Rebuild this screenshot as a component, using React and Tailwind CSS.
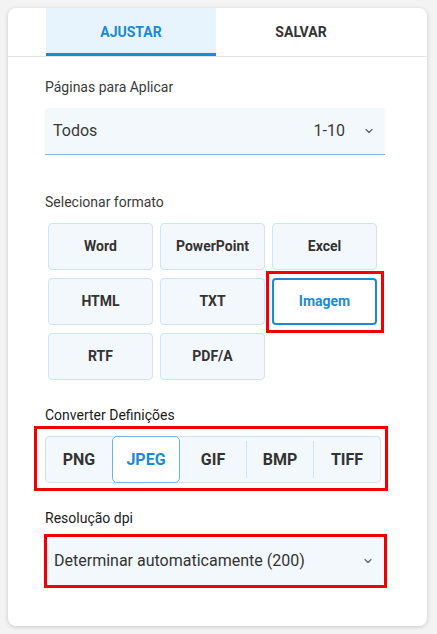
import { ChevronDown } from 'lucide-react';

const formats = ['Word', 'PowerPoint', 'Excel', 'HTML', 'TXT', 'Imagem', 'RTF', 'PDF/A'];
const imageTypes = ['PNG', 'JPEG', 'GIF', 'BMP', 'TIFF'];

export default function App() {
    const selectedFormat = 'Imagem';
    const selectedType = 'JPEG';

    return (
        <div className="min-h-[634px] bg-[#f3f3f3] pt-[8px] pl-[8px]" style={{ fontFamily: 'Roboto, "Noto Sans", sans-serif' }}>
            <div className="w-[419px] h-[618px] bg-white rounded-[8px] shadow-[0_1px_4px_rgba(0,0,0,0.18)] overflow-hidden">
                {/* Tabs */}
                <div className="border-b border-[#e2e2e2]">
                    <div className="ml-[38px] w-[340px] flex">
                        <button className="w-[170px] h-[48px] bg-[#e8f4fd] border-b-[3px] border-[#1a8ad8] text-[#1a8ad8] font-bold text-[14px] pt-[3px]">
                            AJUSTAR
                        </button>
                        <button className="w-[170px] h-[48px] text-[#333] font-bold text-[14px]">
                            SALVAR
                        </button>
                    </div>
                </div>

                <div className="pl-[37px] w-[377px]">
                    {/* Páginas */}
                    <p className="mt-[20px] text-[14px] leading-[20px] text-[#3a3a3a]">Páginas para Aplicar</p>
                    <div className="mt-[11px] h-[47px] bg-[#f3f8fc] border-b border-[#7fb4dc] rounded-t-[4px] flex items-center pl-[8px] pr-[10px] text-[16px] text-[#3a3a3a]">
                        <span className="flex-1">Todos</span>
                        <span className="mr-[18px]">1-10</span>
                        <ChevronDown size={12} strokeWidth={2.5} className="text-[#666]" />
                    </div>

                    {/* Formato */}
                    <p className="mt-[37px] text-[14px] leading-[20px] text-[#3a3a3a]">Selecionar formato</p>
                    <div className="mt-[11px] ml-[3px] w-[329px] grid grid-cols-3 gap-x-[7px] gap-y-[8px]">
                        {formats.map((f) =>
                            f === selectedFormat ? (
                                <div key={f} className="relative">
                                    <button className="w-full h-[47px] bg-white border-2 border-[#1a8ad8] rounded-[4px] text-[#1a8ad8] font-bold text-[14px]">
                                        {f}
                                    </button>
                                    <span className="absolute -left-[6px] -right-[7px] -top-[7px] -bottom-[8px] border-[3px] border-[#f20000] pointer-events-none" />
                                </div>
                            ) : (
                                <button key={f} className="h-[47px] bg-[#f3f8fc] border border-[#cde4f6] rounded-[4px] text-[#333] font-bold text-[14px]">
                                    {f}
                                </button>
                            )
                        )}
                    </div>

                    {/* Converter */}
                    <p className="mt-[25px] text-[14px] leading-[20px] text-[#1a1a1a]">Converter Definições</p>
                    <div className="relative mt-[11px] w-[336px]">
                        <div className="h-[47px] flex bg-[#f3f8fc] border border-[#cde4f6] rounded-[4px]">
                            {imageTypes.map((t, i) =>
                                t === selectedType ? (
                                    <div key={t} className="flex-1 flex items-center justify-center bg-white border border-[#6fb3e3] rounded-[5px] text-[#1a8ad8] font-bold text-[16px] -my-px">
                                        {t}
                                    </div>
                                ) : (
                                    <div key={t} className={`flex-1 flex items-center justify-center text-[#333] font-bold text-[16px] ${i > 2 ? 'border-l border-[#cde4f6] my-[4px]' : ''}`}>
                                        {t}
                                    </div>
                                )
                            )}
                        </div>
                        <span className="absolute -left-[11px] -right-[7px] -top-[10px] -bottom-[8px] border-[3px] border-[#f20000] pointer-events-none" />
                    </div>

                    {/* Resolução */}
                    <p className="mt-[25px] text-[14px] leading-[20px] text-[#1a1a1a]">Resolução dpi</p>
                    <div className="relative mt-[7px] w-[340px]">
                        <div className="h-[52px] bg-[#f3f8fc] flex items-center pl-[9px] pr-[11px] text-[16px] text-[#333]">
                            <span className="flex-1">Determinar automaticamente (200)</span>
                            <ChevronDown size={12} strokeWidth={2.5} className="text-[#666]" />
                        </div>
                        <span className="absolute -left-[1px] -right-[2px] -top-[1px] -bottom-[1px] border-[3px] border-[#f20000] pointer-events-none" />
                    </div>
                </div>
            </div>
        </div>
    );
}
